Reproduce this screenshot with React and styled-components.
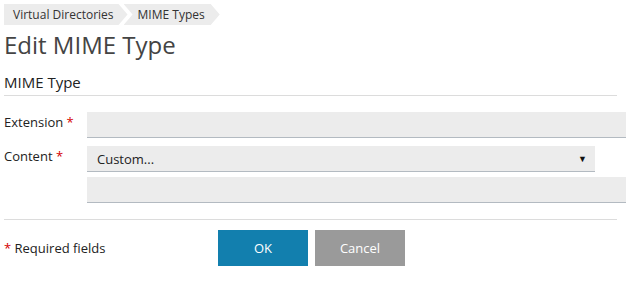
import React from "react";
import styled, { createGlobalStyle } from "styled-components";

const GlobalStyle = createGlobalStyle`
  html, body {
    margin: 0;
    padding: 0;
    background: #fff;
  }
  body {
    font-family: "Open Sans", "Liberation Sans", sans-serif;
    color: #222;
  }
`;

const Page = styled.div`
  width: 636px;
  height: 282px;
  padding: 4px 10px 0 4px;
  box-sizing: border-box;
`;

const Crumbs = styled.nav`
  display: flex;
  height: 21px;
`;

const Crumb = styled.span`
  display: flex;
  align-items: center;
  font-size: 12px;
  color: #333;
  background: #ececec;
  padding: ${(p) => (p.first ? "0 14px 0 9px" : "0 15px 0 14px")};
  margin-left: ${(p) => (p.first ? "0" : "-4px")};
  clip-path: ${(p) =>
    p.first
      ? "polygon(0 0, calc(100% - 9px) 0, 100% 50%, calc(100% - 9px) 100%, 0 100%)"
      : "polygon(0 0, calc(100% - 9px) 0, 100% 50%, calc(100% - 9px) 100%, 0 100%, 9px 50%)"};
`;

const Title = styled.h1`
  margin: 5px 0 0;
  font-size: 24px;
  font-weight: 400;
  color: #444;
  line-height: 30px;
`;

const Section = styled.h2`
  margin: 12px 0 0;
  font-size: 15px;
  font-weight: 400;
  color: #222;
  line-height: 20px;
  padding-bottom: 3px;
  border-bottom: 1px solid #dcdcdc;
  width: 613px;
`;

const Form = styled.div`
  display: grid;
  grid-template-columns: 83px 539px;
  row-gap: 8px;
  margin-top: 16px;
`;

const Label = styled.label`
  font-size: 13px;
  line-height: 18px;
  padding-top: 1px;
  color: #222;
`;

const Star = styled.span`
  color: #d40000;
`;

const Field = styled.div`
  height: 25px;
  background: #ececec;
  border-bottom: 1px solid #b3bac1;
  width: ${(p) => p.width || "539px"};
  box-sizing: content-box;
  display: flex;
  align-items: center;
  justify-content: space-between;
  font-size: 13px;
`;

const Stack = styled.div`
  display: flex;
  flex-direction: column;
  gap: 5px;
`;

const SelectText = styled.span`
  padding-left: 10px;
  color: #222;
`;

const Caret = styled.span`
  font-size: 9px;
  padding-right: 8px;
  color: #111;
`;

const Footer = styled.div`
  margin-top: 16px;
  border-top: 1px solid #dcdcdc;
  width: 613px;
  padding-top: 10px;
  display: flex;
  align-items: center;
`;

const Note = styled.span`
  width: 214px;
  font-size: 13px;
  color: #222;
`;

const Button = styled.button`
  width: 90px;
  height: 36px;
  border: none;
  margin-right: 7px;
  font-family: "Open Sans", "Liberation Sans", sans-serif;
  font-size: 13px;
  color: #fff;
  background: ${(p) => (p.primary ? "#127fae" : "#9a9a9a")};
`;

export default function App() {
  return (
    <>
      <GlobalStyle />
      <Page>
        <Crumbs>
          <Crumb first>Virtual Directories</Crumb>
          <Crumb>MIME Types</Crumb>
        </Crumbs>
        <Title>Edit MIME Type</Title>
        <Section>MIME Type</Section>
        <Form>
          <Label>
            Extension <Star>*</Star>
          </Label>
          <Field />
          <Label>
            Content <Star>*</Star>
          </Label>
          <Stack>
            <Field width="508px">
              <SelectText>Custom...</SelectText>
              <Caret>▼</Caret>
            </Field>
            <Field />
          </Stack>
        </Form>
        <Footer>
          <Note>
            <Star>*</Star> Required fields
          </Note>
          <Button primary>OK</Button>
          <Button>Cancel</Button>
        </Footer>
      </Page>
    </>
  );
}
